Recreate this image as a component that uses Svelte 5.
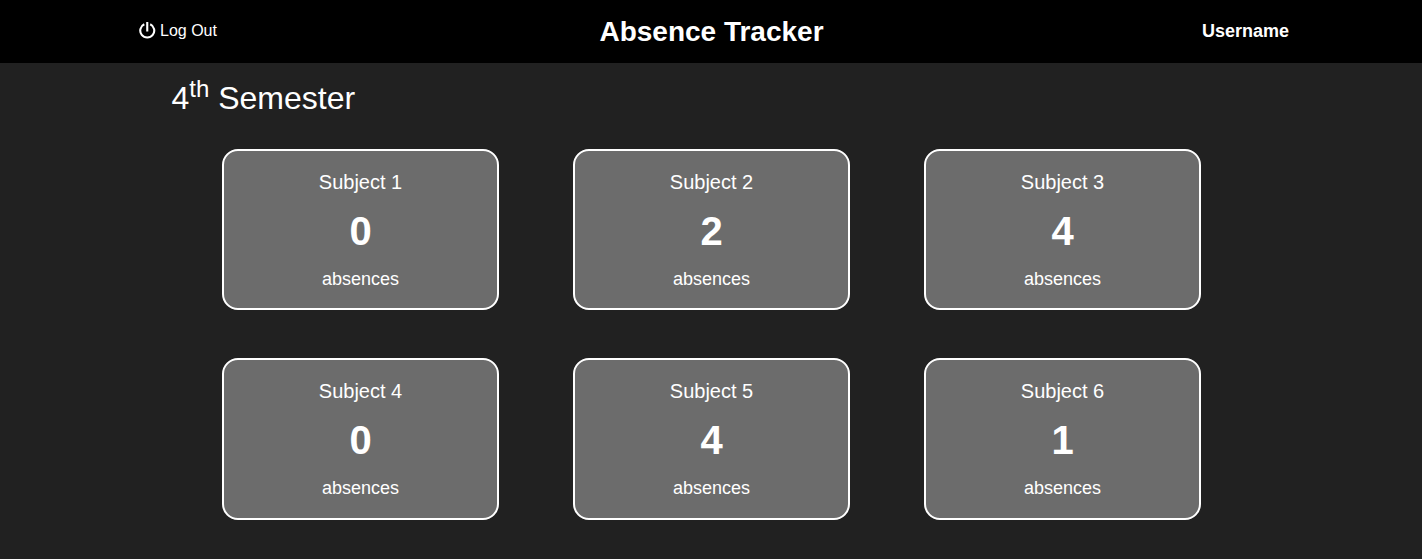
<script>
  const subjects = [
    { name: 'Subject 1', count: 0 },
    { name: 'Subject 2', count: 2 },
    { name: 'Subject 3', count: 4 },
    { name: 'Subject 4', count: 0 },
    { name: 'Subject 5', count: 4 },
    { name: 'Subject 6', count: 1 }
  ];
</script>

<header>
  <div class="logout">
    <svg viewBox="0 0 17 17" width="17" height="17" aria-hidden="true">
      <path fill="none" stroke="#fff" stroke-width="2.1" d="M5.300 2.200A7 7 0 1 0 11.200 2.200M8.250 0V9.500" />
    </svg>
    <span>Log Out</span>
  </div>
  <h1>Absence Tracker</h1>
  <div class="user">Username</div>
</header>
<main>
  <h2>4<sup>th</sup> Semester</h2>
  <div class="cards">
    {#each subjects as subject}
      <article>
        <div class="name">{subject.name}</div>
        <div class="count">{subject.count}</div>
        <div class="label">absences</div>
      </article>
    {/each}
  </div>
</main>

<style>
  :global(body) {
    background: #212121;
    color: #fff;
    font-family: "Liberation Sans", Arial, sans-serif;
  }
  header {
    display: grid;
    grid-template-columns: repeat(3, 1fr);
    align-items: center;
    height: 63px;
    padding: 0 133px 0 139px;
    background: #000;
    box-sizing: border-box;
  }
  .logout {
    display: flex;
    align-items: center;
    gap: 4px;
    font-size: 16px;
    line-height: 18px;
    padding-bottom: 2px;
  }
  h1 {
    margin: 0;
    font-size: 28px;
    line-height: 32px;
    text-align: center;
    margin-left: -5px;
  }
  .user {
    font-size: 18px;
    line-height: 20px;
    font-weight: 700;
    text-align: right;
    padding-bottom: 1px;
  }
  h2 {
    margin: 0;
    height: 86px;
    padding: 17px 0 0 171.500px;
    box-sizing: border-box;
    font-size: 32px;
    line-height: 37px;
    font-weight: 400;
  }
  sup {
    font-size: 24px;
    line-height: 0;
    vertical-align: super;
  }
  .cards {
    display: grid;
    grid-template-columns: repeat(3, 277px);
    grid-template-rows: 161px 162px;
    column-gap: 74px;
    row-gap: 48px;
    justify-content: start;
    padding-left: 222px;
  }
  article {
    box-sizing: border-box;
    border: 2px solid #fff;
    border-radius: 16px;
    background: #6c6c6c;
    text-align: center;
    padding-top: 20px;
  }
  .name {
    font-size: 20px;
    line-height: 23px;
  }
  .count {
    font-size: 40px;
    line-height: 46px;
    font-weight: 700;
    margin-top: 14px;
  }
  .label {
    font-size: 18px;
    line-height: 20px;
    margin-top: 15px;
  }
</style>
